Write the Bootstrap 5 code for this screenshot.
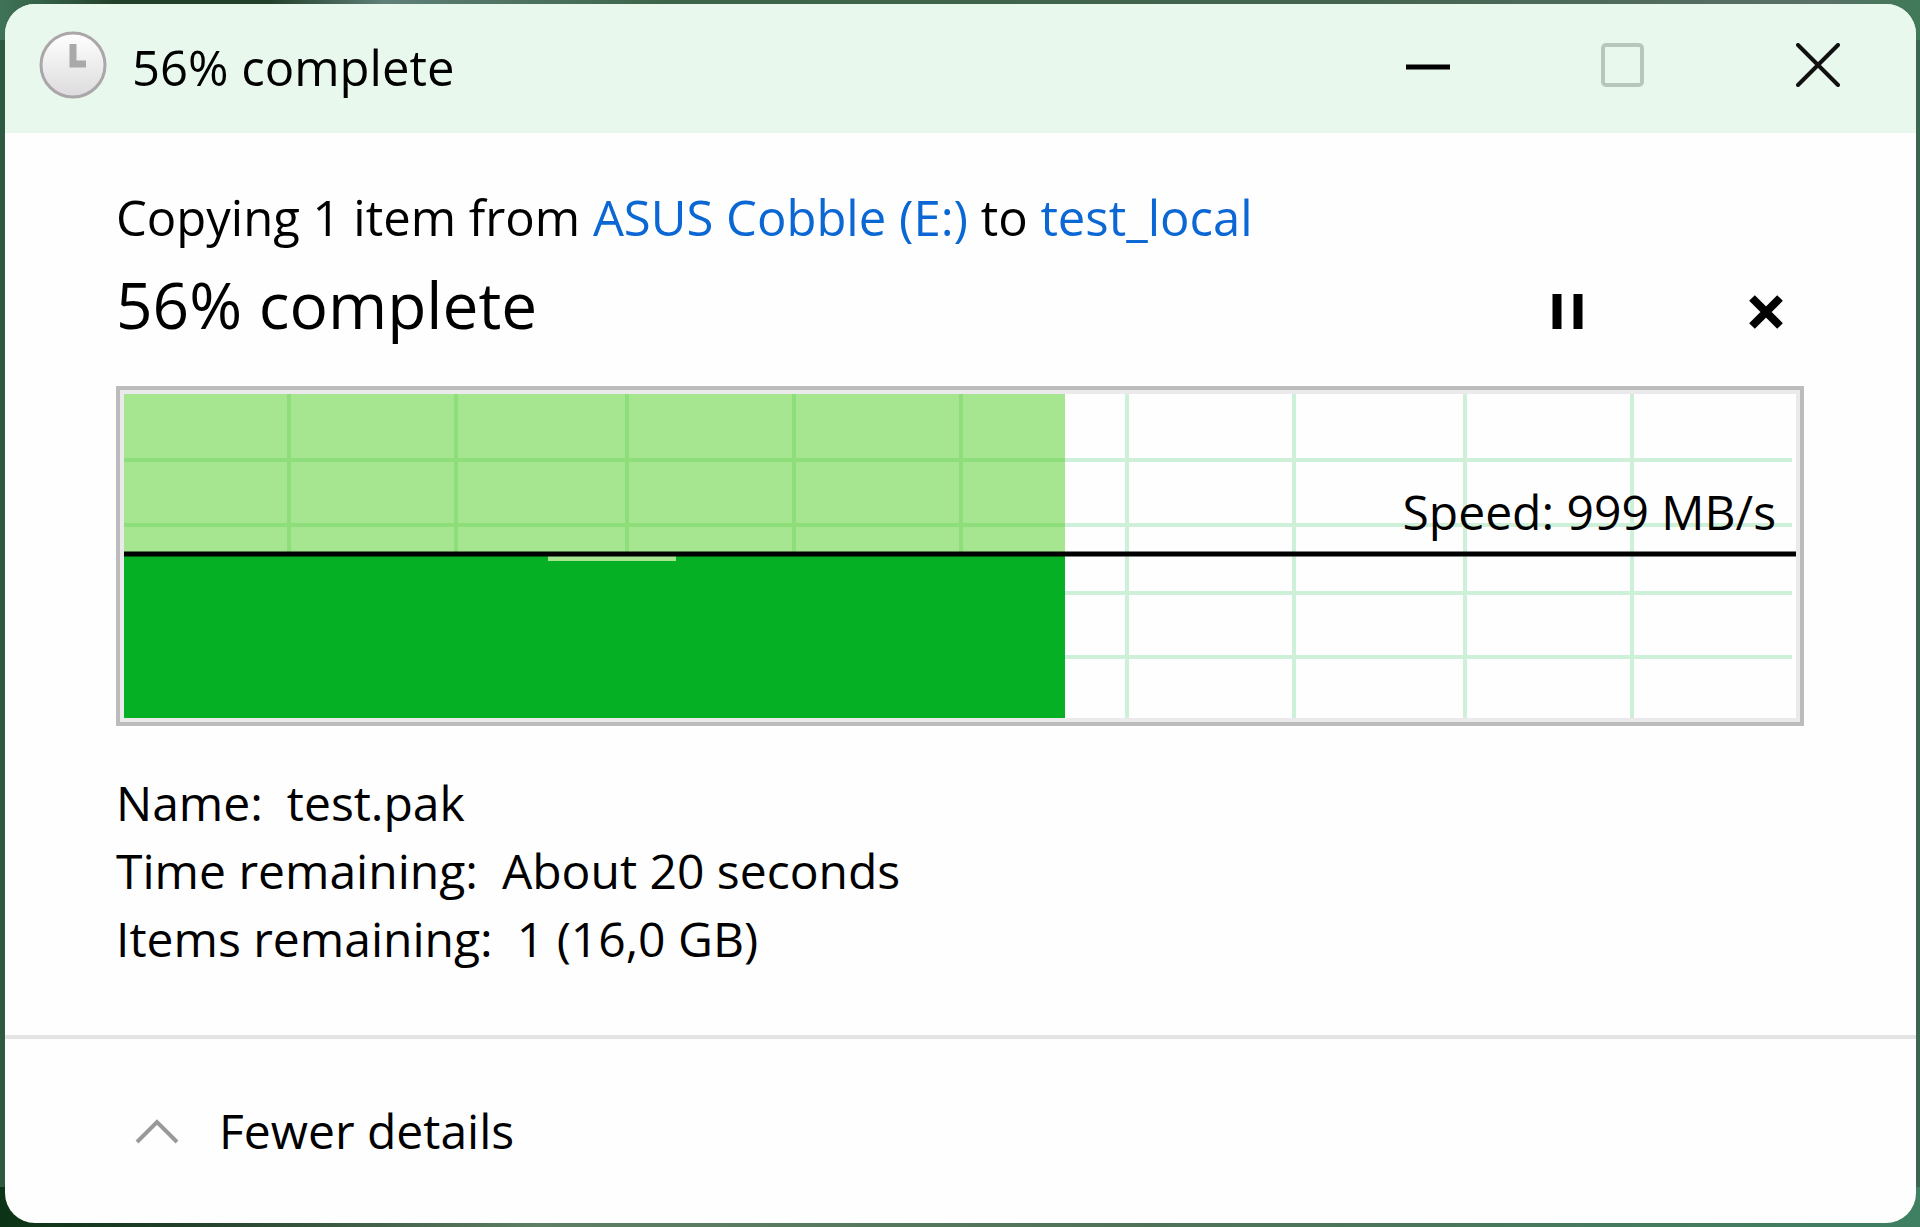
<!DOCTYPE html>
<html lang="en">
<head>
<meta charset="utf-8">
<meta name="viewport" content="width=device-width, initial-scale=1">
<title>56% complete</title>
<link href="https://cdn.jsdelivr.net/npm/bootstrap@5.3.0/dist/css/bootstrap.min.css" rel="stylesheet">
<style>
body { font-family: "Open Sans", "Noto Sans", sans-serif; font-size: 48px; line-height: 68px; color: #000; padding: 4px 4px 4px 5px;
  background:
    linear-gradient(90deg, #3f7458, #23402a 6%, #23402a 14%, #5f7f78 20%, #3c6448 35%, #44644f 70%, #5a7068 95%, #3f7a58) top / 100% 40px no-repeat,
    linear-gradient(90deg, #0c3315, #23402a 10%, #5f7f64 28%, #4f7257 60%, #3f7f62) bottom / 100% 40px no-repeat,
    linear-gradient(90deg, #2f5a42 50%, #3a6650 50%); }
.copy-window { background: #fefefe; border-radius: 30px; }
.title-bar { background: #e8f8ed; height: 129px; padding: 0 40px 8px 33px; }
.headline { font-size: 49px; }
.caption-btn { width: 116px; height: 100px; }
.caption-gap { gap: 79px; }
.window-body { padding: 50px 112px 0 111px; }
.percent { font-size: 64px; line-height: 108px; }
.copy-window .window-body a { color: #0a67d3; }
.job-btn { width: 48px; height: 94px; }
.job-set { gap: 150px; padding-right: 14px; }
.speed-chart { border: 4px solid #bcbcbc; padding: 4px; background: #ebe9eb; margin-top: 27px; }
.speed-chart svg { height: 324px; }
.speed-label { right: 24px; top: 88px; }
.detail-list { padding: 43px 0 62px; }
.detail-list dd { margin-left: 24px; }
.window-foot { border-top: 4px solid #e4e4e4; padding: 58px 130px; }
.foot-gap { gap: 40px; }
</style>
</head>
<body class="min-vh-100 d-flex flex-column">
<main class="copy-window flex-grow-1 d-flex flex-column overflow-hidden">
  <header class="title-bar d-flex align-items-center justify-content-between">
    <div class="d-flex align-items-center gap-4">
      <svg width="70" height="70" viewBox="0 0 70 70" aria-hidden="true">
        <defs><linearGradient id="face" x1="0" y1="0" x2="0" y2="1"><stop offset="0" stop-color="#fff"/><stop offset="1" stop-color="#dddbdd"/></linearGradient></defs>
        <circle cx="35" cy="35" r="32" fill="url(#face)" stroke="#aaa6aa" stroke-width="3"/>
        <path d="M35 14v20h13" fill="none" stroke="#aaa8aa" stroke-width="7"/>
      </svg>
      <span class="headline pt-1">56% complete</span>
    </div>
    <div class="d-flex caption-gap">
      <button type="button" class="caption-btn btn p-0 border-0 d-flex align-items-center justify-content-center" aria-label="Minimize"><svg width="44" height="44" viewBox="0 0 44 44"><path d="M0 24h44" stroke="#000" stroke-width="5"/></svg></button>
      <button type="button" class="caption-btn btn p-0 border-0 d-flex align-items-center justify-content-center" aria-label="Maximize"><svg width="44" height="44" viewBox="0 0 44 44"><rect x="2" y="2" width="39" height="40" rx="3" fill="none" stroke="#b9c6bd" stroke-width="4"/></svg></button>
      <button type="button" class="caption-btn btn p-0 border-0 d-flex align-items-center justify-content-center" aria-label="Close"><svg width="44" height="44" viewBox="0 0 44 44"><path d="M2 2l40 40M42 2L2 42" stroke="#111" stroke-width="4" stroke-linecap="round"/></svg></button>
    </div>
  </header>
  <section class="window-body">
    <div class="headline">Copying 1 item from <a class="text-decoration-none" href="#">ASUS Cobble (E:)</a> to <a class="text-decoration-none" href="#">test_local</a></div>
    <div class="d-flex align-items-end justify-content-between">
      <h1 class="percent fw-normal m-0">56% complete</h1>
      <div class="d-flex job-set">
        <button type="button" class="job-btn btn p-0 border-0 d-flex align-items-center justify-content-center" aria-label="Pause"><svg width="32" height="36" viewBox="0 0 32 36"><path d="M5 0v35M26 0v35" stroke="#000" stroke-width="9"/></svg></button>
        <button type="button" class="job-btn btn p-0 border-0 d-flex align-items-center justify-content-center" aria-label="Cancel"><svg width="36" height="36" viewBox="0 0 36 36"><path d="M4 4l28 28M32 4L4 32" stroke="#000" stroke-width="8"/></svg></button>
      </div>
    </div>
    <div class="speed-chart position-relative">
      <svg class="d-block w-100" viewBox="0 0 1672 324" preserveAspectRatio="none" role="img" aria-label="Transfer speed">
        <path fill="#fefefe" d="M0 0h1672v324H0z"/>
        <path stroke="#cff0d8" stroke-width="4" d="M1003 0v324M1170 0v324M1341 0v324M1508 0v324M941 66h727M941 131h727M941 199h727M941 263h727"/>
        <path fill="#a7e691" d="M0 0h941v160H0z"/>
        <path stroke="#8edf7c" stroke-width="4" d="M165 0v160M332 0v160M503 0v160M670 0v160M837 0v160M0 66h941M0 131h941"/>
        <path fill="#06b025" d="M0 160h941v164H0z"/>
        <path fill="#a7e691" d="M424 162h128v5H424z"/>
        <path stroke="#000" stroke-width="5" d="M0 160h1672"/>
      </svg>
      <span class="speed-label position-absolute">Speed: 999 MB/s</span>
    </div>
    <dl class="detail-list m-0">
      <div class="d-flex"><dt class="fw-normal">Name:</dt><dd class="mb-0">test.pak</dd></div>
      <div class="d-flex"><dt class="fw-normal">Time remaining:</dt><dd class="mb-0">About 20 seconds</dd></div>
      <div class="d-flex"><dt class="fw-normal">Items remaining:</dt><dd class="mb-0">1 (16,0 GB)</dd></div>
    </dl>
  </section>
  <footer class="window-foot d-flex">
    <a href="#" class="d-flex align-items-center foot-gap text-decoration-none text-black">
      <svg width="44" height="26" viewBox="0 0 44 26" aria-hidden="true"><path d="M2 24L22 4l20 20" fill="none" stroke="#999" stroke-width="4"/></svg>
      <span>Fewer details</span>
    </a>
  </footer>
</main>
<script src="https://cdn.jsdelivr.net/npm/bootstrap@5.3.0/dist/js/bootstrap.bundle.min.js"></script>
</body>
</html>
